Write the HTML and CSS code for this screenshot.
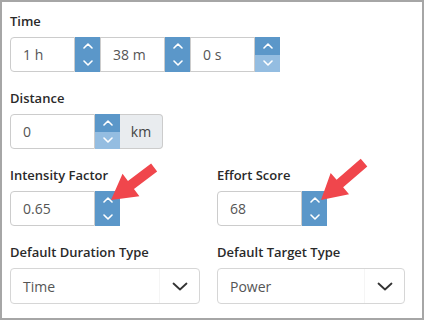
FILE: index.html
```html
<!DOCTYPE html>
<html lang="en">
<head>
    <meta charset="UTF-8">
    <title>Workout Settings</title>
    <link rel="stylesheet" href="styles.css">
</head>
<body>

    <div class="panel">
        <div class="field">
            <label class="field-label">Time</label>
            <div class="input-row">
                <div class="num-group time-part first">
                    <input type="text" class="num-input" value="1 h">
                    <div class="spinner">
                        <span class="spin-btn up"><svg width="10" height="6" viewBox="0 0 10 6"><path d="M1 5 L5 1 L9 5"/></svg></span>
                        <span class="spin-btn down"><svg width="10" height="6" viewBox="0 0 10 6"><path d="M1 1 L5 5 L9 1"/></svg></span>
                    </div>
                </div>
                <div class="num-group time-part">
                    <input type="text" class="num-input" value="38 m">
                    <div class="spinner">
                        <span class="spin-btn up"><svg width="10" height="6" viewBox="0 0 10 6"><path d="M1 5 L5 1 L9 5"/></svg></span>
                        <span class="spin-btn down"><svg width="10" height="6" viewBox="0 0 10 6"><path d="M1 1 L5 5 L9 1"/></svg></span>
                    </div>
                </div>
                <div class="num-group time-part">
                    <input type="text" class="num-input" value="0 s">
                    <div class="spinner">
                        <span class="spin-btn up"><svg width="10" height="6" viewBox="0 0 10 6"><path d="M1 5 L5 1 L9 5"/></svg></span>
                        <span class="spin-btn down disabled"><svg width="10" height="6" viewBox="0 0 10 6"><path d="M1 1 L5 5 L9 1"/></svg></span>
                    </div>
                </div>
            </div>
        </div>

        <div class="field">
            <label class="field-label">Distance</label>
            <div class="num-group first">
                <input type="text" class="num-input wide" value="0">
                <div class="spinner">
                    <span class="spin-btn up"><svg width="10" height="6" viewBox="0 0 10 6"><path d="M1 5 L5 1 L9 5"/></svg></span>
                    <span class="spin-btn down disabled"><svg width="10" height="6" viewBox="0 0 10 6"><path d="M1 1 L5 5 L9 1"/></svg></span>
                </div>
                <span class="addon">km</span>
            </div>
        </div>

        <div class="grid">
            <div class="field">
                <label class="field-label">Intensity Factor</label>
                <div class="num-group first">
                    <input type="text" class="num-input wide" value="0.65">
                    <div class="spinner">
                        <span class="spin-btn up"><svg width="10" height="6" viewBox="0 0 10 6"><path d="M1 5 L5 1 L9 5"/></svg></span>
                        <span class="spin-btn down"><svg width="10" height="6" viewBox="0 0 10 6"><path d="M1 1 L5 5 L9 1"/></svg></span>
                    </div>
                </div>
            </div>
            <div class="field">
                <label class="field-label">Effort Score</label>
                <div class="num-group first">
                    <input type="text" class="num-input wide" value="68">
                    <div class="spinner">
                        <span class="spin-btn up"><svg width="10" height="6" viewBox="0 0 10 6"><path d="M1 5 L5 1 L9 5"/></svg></span>
                        <span class="spin-btn down"><svg width="10" height="6" viewBox="0 0 10 6"><path d="M1 1 L5 5 L9 1"/></svg></span>
                    </div>
                </div>
            </div>
            <div class="field">
                <label class="field-label">Default Duration Type</label>
                <div class="select">
                    <span class="select-value">Time</span>
                    <span class="select-caret"><svg width="16" height="9" viewBox="0 0 16 9"><path d="M1.5 1.5 L8 7.5 L14.5 1.5"/></svg></span>
                </div>
            </div>
            <div class="field">
                <label class="field-label">Default Target Type</label>
                <div class="select">
                    <span class="select-value">Power</span>
                    <span class="select-caret"><svg width="16" height="9" viewBox="0 0 16 9"><path d="M1.5 1.5 L8 7.5 L14.5 1.5"/></svg></span>
                </div>
            </div>
        </div>

        <!-- callout arrows pointing at the spinners -->
        <svg class="callouts" width="424" height="320" viewBox="0 0 424 320">
            <polygon points="0,0 25,-14 25,-5 54,-5 54,5 25,5 25,14" transform="translate(111 200) rotate(-37)"/>
            <polygon points="0,0 25,-14 25,-5 57,-5 57,5 25,5 25,14" transform="translate(321 200) rotate(-41)"/>
        </svg>
    </div>

</body>
</html>
```

FILE: styles.css
```css
body {
    margin: 0;
    padding: 0;
    font-family: "Open Sans", Arial, sans-serif;
    background-color: #fff;
}

.panel {
    position: relative;
    width: 424px;
    height: 320px;
    box-sizing: border-box;
    border: 2px solid #a6a6a6;
    padding: 10px 8px;
}

.field {
    margin-bottom: 17px;
}

.field-label {
    display: block;
    font-size: 13px;
    font-weight: 600;
    line-height: 18px;
    color: #2a2a2a;
    margin-bottom: 7px;
}

.input-row {
    display: flex;
}

.num-group {
    display: flex;
    height: 35px;
}

.num-input {
    box-sizing: border-box;
    width: 65px;
    height: 35px;
    margin: 0;
    padding: 0 0 0 12px;
    border: 1px solid #ccc;
    border-radius: 0;
    font-family: "Open Sans", Arial, sans-serif;
    font-size: 14px;
    color: #555;
    outline: none;
}

.num-input.wide {
    width: 85px;
}

.first .num-input {
    border-radius: 4px 0 0 4px;
}

.spinner {
    width: 25px;
    display: flex;
    flex-direction: column;
}

.spin-btn {
    flex: 1;
    display: flex;
    align-items: center;
    justify-content: center;
    background-color: #5b97c9;
}

.spin-btn.disabled {
    background-color: #94bde1;
}

.spin-btn svg path {
    fill: none;
    stroke: #fff;
    stroke-width: 1.6;
    stroke-linecap: round;
    stroke-linejoin: round;
}

.addon {
    box-sizing: border-box;
    width: 43px;
    display: flex;
    align-items: center;
    justify-content: center;
    background-color: #e9ecef;
    border: 1px solid #ccc;
    border-left: none;
    border-radius: 0 4px 4px 0;
    font-size: 14px;
    color: #444;
}

.grid {
    display: grid;
    grid-template-columns: 190px 188px;
    column-gap: 17px;
}

.select {
    box-sizing: border-box;
    height: 36px;
    display: flex;
    align-items: center;
    border: 1px solid #d6d6d6;
    border-radius: 4px;
}

.select-value {
    flex: 1;
    padding-left: 12px;
    font-size: 14px;
    color: #555;
    height: 100%;
    display: flex;
    align-items: center;
    border-right: 1px solid #f5f5f5;
}

.select-caret {
    width: 39px;
    display: flex;
    justify-content: center;
    align-items: center;
}

.select-caret svg path {
    fill: none;
    stroke: #333;
    stroke-width: 1.8;
    stroke-linecap: round;
    stroke-linejoin: round;
}

.callouts {
    position: absolute;
    left: -2px;
    top: -2px;
    pointer-events: none;
}

.callouts polygon {
    fill: #f0464c;
}
```
